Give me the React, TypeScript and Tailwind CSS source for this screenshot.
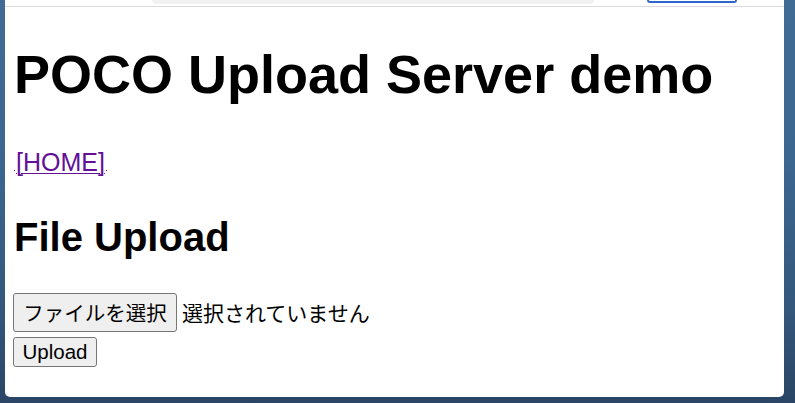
import React from "react";

export default function App() {
  return (
    <div className="w-[795px] h-[403px] overflow-hidden flex bg-[linear-gradient(180deg,#3f6b95_0%,#3b6690_40%,#34587d_75%,#2a4565_100%)]">
      <div className="ml-[5px] w-[779px] h-[397px] bg-white rounded-b-[5px] flex flex-col">
        {/* browser toolbar remnant */}
        <div className="h-[6px] relative shrink-0">
          <div className="absolute left-[147px] top-0 w-[442px] h-[4px] bg-[#f1f1f2] rounded-b-[6px]" />
          <div className="absolute left-[642px] top-0 w-[90px] h-[3px] border-2 border-t-0 border-[#2f66cc] rounded-b-[6px]" />
        </div>
        <div className="h-px bg-[#dadada] shrink-0" />
        <div
          className="flex flex-col items-start pl-[9px] text-black"
          style={{ fontFamily: '"Liberation Sans", "Noto Sans CJK JP", Arial, sans-serif' }}
        >
          <h1 className="mt-[37px] h-[60px] text-[54px] leading-[60px] font-bold whitespace-nowrap">
            POCO Upload Server demo
          </h1>
          <div className="mt-[43px] h-[30px] text-[25px] leading-[30px] flex items-baseline">
            <span className="inline-block w-[1px] h-[1px] bg-[#640f9a] mr-[1px]" />
            <a href="#" className="text-[#640f9a] underline decoration-1 underline-offset-[2px]">
              [HOME]
            </a>
            <span className="inline-block w-[1px] h-[1px] bg-[#640f9a] ml-[1px]" />
          </div>
          <h2 className="mt-[37px] h-[46px] text-[40px] leading-[46px] font-bold whitespace-nowrap">
            File Upload
          </h2>
          <div
            className="mt-[33px] flex items-center -ml-[1px]"
            style={{ fontFamily: '"Noto Sans CJK JP", "Liberation Sans", sans-serif' }}
          >
            <button className="h-[39px] w-[164px] flex items-center justify-center bg-[#efefef] border border-[#767676] rounded-[3px] text-[20.5px] leading-none text-black">
              ファイルを選択
            </button>
            <span className="ml-[5px] text-[21px] leading-none text-black whitespace-nowrap">
              選択されていません
            </span>
          </div>
          <button
            className="mt-[5px] -ml-[1px] h-[30px] w-[84px] flex items-center justify-center bg-[#efefef] border border-[#767676] rounded-[3px] text-[20.5px] leading-none text-black"
            style={{ fontFamily: '"Liberation Sans", Arial, sans-serif' }}
          >
            Upload
          </button>
        </div>
      </div>
    </div>
  );
}
